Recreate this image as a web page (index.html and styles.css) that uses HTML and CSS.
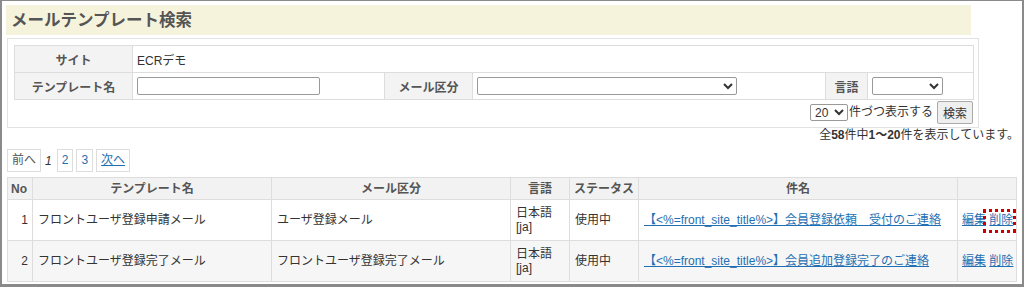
FILE: index.html
```html
<!DOCTYPE html>
<html lang="ja">
<head>
    <meta charset="UTF-8">
    <meta name="viewport" content="width=device-width, initial-scale=1.0">
    <title>メールテンプレート検索</title>
    <link rel="stylesheet" href="styles.css">
</head>
<body>
    <div class="frame">
        <div class="page">
            <h1 class="title">メールテンプレート検索</h1>

            <div class="search-panel">
                <table class="search-table">
                    <colgroup>
                        <col class="c-head1">
                        <col class="c-name">
                        <col class="c-head2">
                        <col class="c-kind">
                        <col class="c-head3">
                        <col class="c-lang">
                    </colgroup>
                    <tr>
                        <th>サイト</th>
                        <td colspan="5">ECRデモ</td>
                    </tr>
                    <tr>
                        <th>テンプレート名</th>
                        <td><input type="text" class="text-input"></td>
                        <th>メール区分</th>
                        <td><select class="kind-select"><option></option></select></td>
                        <th>言語</th>
                        <td><select class="lang-select"><option></option></select></td>
                    </tr>
                </table>

                <div class="per-page">
                    <select class="count-select"><option>20</option></select>件づつ表示する<button class="search-btn">検索</button>
                </div>
            </div>

            <p class="result-count">全<b>58</b>件中<b>1〜20</b>件を表示しています。</p>

            <div class="pager">
                <span class="page-box disabled">前へ</span>
                <span class="current">1</span>
                <a class="page-box" href="#">2</a>
                <a class="page-box" href="#">3</a>
                <a class="page-box next" href="#">次へ</a>
            </div>

            <table class="list-table">
                <colgroup>
                    <col class="c-no">
                    <col class="c-tpl">
                    <col class="c-type">
                    <col class="c-lg">
                    <col class="c-status">
                    <col class="c-subject">
                    <col class="c-actions">
                </colgroup>
                <thead>
                    <tr>
                        <th>No</th>
                        <th>テンプレート名</th>
                        <th>メール区分</th>
                        <th>言語</th>
                        <th>ステータス</th>
                        <th>件名</th>
                        <th></th>
                    </tr>
                </thead>
                <tbody>
                    <tr>
                        <td class="no">1</td>
                        <td>フロントユーザ登録申請メール</td>
                        <td>ユーザ登録メール</td>
                        <td>日本語<br>[ja]</td>
                        <td>使用中</td>
                        <td><a href="#">【&lt;%=front_site_title%&gt;】会員登録依頼　受付のご連絡</a></td>
                        <td class="actions"><a href="#">編集</a> <a href="#" class="marked">削除</a></td>
                    </tr>
                    <tr class="alt">
                        <td class="no">2</td>
                        <td>フロントユーザ登録完了メール</td>
                        <td>フロントユーザ登録完了メール</td>
                        <td>日本語<br>[ja]</td>
                        <td>使用中</td>
                        <td><a href="#">【&lt;%=front_site_title%&gt;】会員追加登録完了のご連絡</a></td>
                        <td class="actions"><a href="#">編集</a> <a href="#">削除</a></td>
                    </tr>
                </tbody>
            </table>
        </div>
    </div>
</body>
</html>
```

FILE: styles.css
```css
html, body {
    margin: 0;
    padding: 0;
    background-color: #fff;
}

body {
    font-family: "Liberation Sans", "Noto Sans CJK JP", sans-serif;
    font-size: 12px;
    color: #333;
}

.frame {
    width: 1024px;
    height: 287px;
    box-sizing: border-box;
    border: 2px solid #8a8a8a;
    border-top-width: 1px;
    border-bottom-width: 3px;
    overflow: hidden;
}

.page {
    padding: 4px 6px 0 5px;
}

.title {
    margin: 0 45px 0 -1px;
    padding-left: 5px;
    height: 30px;
    line-height: 30px;
    font-size: 16.5px;
    font-weight: bold;
    color: #555;
    background-color: #f5f3dc;
}

/* search box */
.search-panel {
    width: 972px;
    box-sizing: border-box;
    margin-top: 3px;
    border: 1px solid #e2e2e2;
    padding: 6px 5px 3px 6px;
}

.search-table,
.list-table {
    border-collapse: collapse;
    table-layout: fixed;
}

.search-table {
    width: 959px;
}

.search-table th,
.search-table td {
    border: 1px solid #ddd;
    height: 26px;
    padding: 0 4px;
}

.search-table th {
    background-color: #f3f3f3;
    color: #555;
    font-weight: bold;
    text-align: center;
}

.c-head1 { width: 118px; }
.c-name { width: 252px; }
.c-head2 { width: 88px; }
.c-kind { width: 353px; }
.c-head3 { width: 42px; }
.c-lang { width: 106px; }

.text-input {
    width: 183px;
    height: 18px;
    box-sizing: border-box;
    border: 1px solid #999;
    border-radius: 2px;
    margin: 0;
    padding: 0 3px;
    vertical-align: middle;
}

select {
    font-family: "Liberation Sans", "Noto Sans CJK JP", sans-serif;
    font-size: 12px;
    height: 18px;
    box-sizing: border-box;
    border: 1px solid #999;
    border-radius: 2px;
    background-color: #fff;
    color: #333;
    margin: 0;
    vertical-align: middle;
}

.kind-select { width: 260px; }
.lang-select { width: 71px; }
.count-select {
    width: 38px;
    height: 17px;
    margin-right: 1px;
}

.per-page {
    text-align: right;
    margin-top: 1px;
    height: 23px;
    line-height: 23px;
}

.search-btn {
    font-family: "Liberation Sans", "Noto Sans CJK JP", sans-serif;
    font-size: 12px;
    height: 23px;
    padding: 0 5px;
    margin-left: 4px;
    border: 1px solid #aaa;
    border-radius: 2px;
    background-color: #efefef;
    color: #333;
    vertical-align: middle;
}

.result-count {
    margin: 0 -3px 0 0;
    text-align: right;
    line-height: 14px;
}

/* pager */
.pager {
    display: flex;
    align-items: center;
    gap: 3px;
    margin-top: 7px;
    height: 23px;
}

.page-box {
    display: inline-block;
    height: 21px;
    line-height: 21px;
    padding: 0 4px;
    border: 1px solid #ddd;
    color: #1f6fb2;
    text-decoration: none;
}

.page-box.disabled {
    color: #555;
}

.page-box.next {
    text-decoration: underline;
}

.current {
    font-style: italic;
    padding: 0 2px 0 1px;
}

/* list */
.list-table {
    width: 1009px;
    margin-top: 5px;
}

.c-no { width: 25px; }
.c-tpl { width: 239px; }
.c-type { width: 239px; }
.c-lg { width: 59px; }
.c-status { width: 69px; }
.c-subject { width: 319px; }
.c-actions { width: 59px; }

.list-table th,
.list-table td {
    border: 1px solid #ddd;
    line-height: 14px;
}

.list-table th {
    height: 21px;
    padding: 0 3px;
    background-color: #f2f2f2;
    color: #555;
    font-weight: bold;
    text-align: center;
}

.list-table th:first-child {
    text-align: left;
}

.list-table td {
    height: 40px;
    padding: 0 4px 0 5px;
}

.list-table td.no {
    text-align: right;
    padding: 0 4px 0 0;
}

.list-table tr.alt td {
    background-color: #f6f6f6;
}

.list-table a {
    color: #1f6fb2;
    text-decoration: underline;
}

.list-table td.actions {
    padding: 0 2px 0 4px;
    white-space: nowrap;
}

.marked {
    position: relative;
}

.marked::after {
    content: "";
    position: absolute;
    left: -6px;
    right: -3px;
    top: -4px;
    bottom: -6px;
    border: 3px dotted #cc0000;
}
```
